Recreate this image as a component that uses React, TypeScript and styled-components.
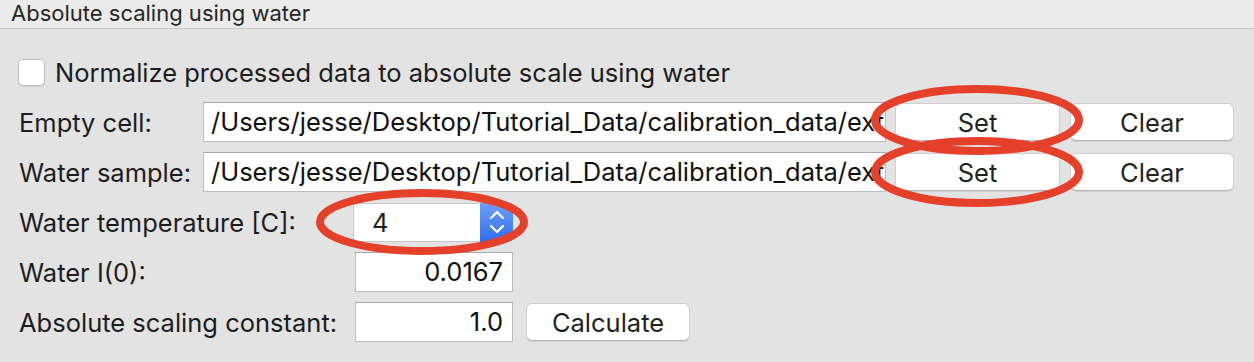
import React from "react";
import styled, { createGlobalStyle } from "styled-components";

const Global = createGlobalStyle`
  html, body { margin: 0; padding: 0; background: #e3e3e3; }
  body { font-family: Inter, "Liberation Sans", Arial, sans-serif; color: #1d1d1d; }
  * { box-sizing: border-box; }
`;

const Page = styled.div`
  position: relative;
  width: 1254px;
  height: 362px;
  overflow: hidden;
  background: #e3e3e3;
`;

const TitleBar = styled.div`
  height: 29px;
  background: #ebebeb;
  border-bottom: 1px solid #cbcbcb;
  padding-left: 11px;
  font-size: 22px;
  line-height: 27px;
  color: #262626;
`;

const Content = styled.div`
  display: flex;
  flex-direction: column;
  gap: 10px;
  padding: 23px 0 0 19px;
`;

const Row = styled.div`
  display: flex;
  align-items: center;
  height: 40px;
`;

const Check = styled.span`
  width: 27px;
  height: 27px;
  margin-left: -1px;
  border: 1px solid #b9b9b9;
  border-radius: 5px;
  background: #fff;
  box-shadow: 0 1px 1px rgba(0, 0, 0, 0.08);
`;

const CheckLabel = styled.span`
  margin-left: 10px;
  font-size: 25.5px;
`;

const Label = styled.span<{ $w: number }>`
  width: ${(p) => p.$w}px;
  flex: none;
  font-size: 25.5px;
  white-space: nowrap;
`;

const Field = styled.div<{ $w: number; $align?: string }>`
  width: ${(p) => p.$w}px;
  height: 40px;
  flex: none;
  background: #fff;
  border: 1px solid #bdbdbd;
  border-top-color: #a9a9a9;
  font-size: 25.5px;
  line-height: 38px;
  color: #111;
  white-space: nowrap;
  overflow: hidden;
  text-align: ${(p) => p.$align || "left"};
  padding: ${(p) => (p.$align === "right" ? "0 9px 0 0" : "0 0 0 7px")};
`;

const Button = styled.div<{ $w: number; $ml: number }>`
  width: ${(p) => p.$w}px;
  height: 38px;
  margin-left: ${(p) => p.$ml}px;
  flex: none;
  background: #fff;
  border: 1px solid #cfcfcf;
  border-bottom-color: #b3b3b3;
  border-radius: 6px;
  box-shadow: 0 1px 1px rgba(0, 0, 0, 0.07);
  display: flex;
  align-items: center;
  justify-content: center;
  font-size: 25.5px;
  color: #222;
`;

const Spin = styled.div`
  display: flex;
  width: 160px;
  height: 39px;
  margin-left: -2px;
`;

const SpinField = styled.div`
  flex: 1;
  background: #fff;
  border: 1px solid #c6c6c6;
  border-right: none;
  font-size: 25.5px;
  line-height: 37px;
  padding-left: 18px;
  color: #222;
`;

const Stepper = styled.div`
  width: 33px;
  background: linear-gradient(#6e9ff6, #2f6ef2);
  border-radius: 0 5px 5px 0;
  display: flex;
  align-items: center;
  justify-content: center;
`;

const Overlay = styled.svg`
  position: absolute;
  left: 0;
  top: 0;
  pointer-events: none;
`;

const path = "/Users/jesse/Desktop/Tutorial_Data/calibration_data/extracted/MT2_48_001_0000.dat";

export default function App() {
  return (
    <Page>
      <Global />
      <TitleBar>Absolute scaling using water</TitleBar>
      <Content>
        <Row>
          <Check />
          <CheckLabel>Normalize processed data to absolute scale using water</CheckLabel>
        </Row>
        <Row>
          <Label $w={184}>Empty cell:</Label>
          <Field $w={683}>{path}</Field>
          <Button $w={165} $ml={9}>Set</Button>
          <Button $w={164} $ml={10}>Clear</Button>
        </Row>
        <Row>
          <Label $w={184}>Water sample:</Label>
          <Field $w={683}>{path}</Field>
          <Button $w={165} $ml={9}>Set</Button>
          <Button $w={164} $ml={10}>Clear</Button>
        </Row>
        <Row>
          <Label $w={336}>Water temperature [C]:</Label>
          <Spin>
            <SpinField>4</SpinField>
            <Stepper>
              <svg width="18" height="28" viewBox="0 0 18 28">
                <path d="M3 10 L9 4 L15 10" fill="none" stroke="#fff" strokeWidth="2.2" strokeLinecap="round" strokeLinejoin="round" />
                <path d="M3 18 L9 24 L15 18" fill="none" stroke="#fff" strokeWidth="2.2" strokeLinecap="round" strokeLinejoin="round" />
              </svg>
            </Stepper>
          </Spin>
        </Row>
        <Row>
          <Label $w={336}>Water I(0):</Label>
          <Field $w={158} $align="right">0.0167</Field>
        </Row>
        <Row>
          <Label $w={336}>Absolute scaling constant:</Label>
          <Field $w={158} $align="right">1.0</Field>
          <Button $w={164} $ml={13}>Calculate</Button>
        </Row>
      </Content>
      <Overlay width="1254" height="362" viewBox="0 0 1254 362">
        <ellipse cx="977" cy="120" rx="102" ry="31" fill="none" stroke="#e5402a" strokeWidth="8" />
        <ellipse cx="977" cy="172" rx="102" ry="31" fill="none" stroke="#e5402a" strokeWidth="8" />
        <ellipse cx="422" cy="222" rx="102" ry="29" fill="none" stroke="#e5402a" strokeWidth="8" />
      </Overlay>
    </Page>
  );
}
